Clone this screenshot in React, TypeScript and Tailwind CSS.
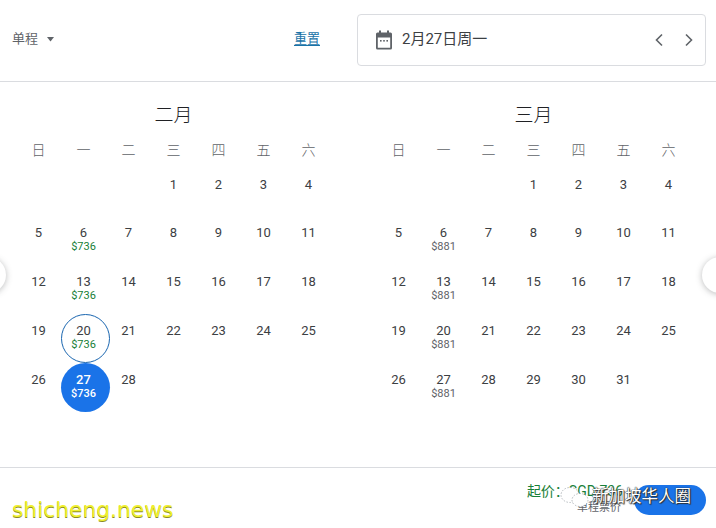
import React from "react";

const weekdays = ["日", "一", "二", "三", "四", "五", "六"];

type Cell = { d: number; p?: string } | null;

function buildMonth(days: number, start: number, price: (d: number) => string | undefined): Cell[] {
  const cells: Cell[] = [];
  for (let i = 0; i < start; i++) cells.push(null);
  for (let d = 1; d <= days; d++) cells.push({ d, p: price(d) });
  return cells;
}

const feb = buildMonth(28, 3, (d) => ([6, 13, 20, 27].includes(d) ? "$736" : undefined));
const mar = buildMonth(31, 3, (d) => ([6, 13, 20, 27].includes(d) ? "$881" : undefined));

function Day({ cell, green }: { cell: Cell; green: boolean }) {
  if (!cell) return <div className="h-[49px]" />;
  const selected = green && cell.d === 27;
  const ringed = green && cell.d === 20;
  return (
    <div className={`relative h-[49px] flex flex-col items-center ${cell.d <= 4 ? "pt-[7px]" : "pt-[6px]"}`}>
      {selected && <div className="absolute left-[-0.500px] top-[-3px] w-[49px] h-[49px] rounded-full bg-[#1a73e8]" />}
      {ringed && <div className="absolute left-[-0.500px] top-[-3px] w-[49px] h-[49px] rounded-full border border-[#1a66b0]" />}
      <div className={`relative text-[13px] leading-[16px] ${selected ? "text-white font-medium" : "text-[#3c4043]"}`}>{cell.d}</div>
      {cell.p && (
        <div
          className={`relative text-[11px] leading-[12px] ${
            selected ? "text-white font-medium" : green ? "text-[#188038]" : "text-[#5f6368]"
          }`}
        >
          {cell.p}
        </div>
      )}
    </div>
  );
}

function Month({ title, cells, green }: { title: string; cells: Cell[]; green: boolean }) {
  return (
    <div className="w-[315px] flex flex-col">
      <div className="h-[24px] mt-[1px] flex items-center justify-center text-[19px] font-light text-[#202124]">{title}</div>
      <div className="grid grid-cols-7 mt-[13px] text-[14px] font-light leading-[18px] text-[#5f6368] text-center">
        {weekdays.map((w) => (
          <div key={w}>{w}</div>
        ))}
      </div>
      <div className="grid grid-cols-7 mt-[11px]">
        {cells.map((c, i) => (
          <Day key={i} cell={c} green={green} />
        ))}
      </div>
    </div>
  );
}

export default function App() {
  return (
    <div className="relative w-[716px] h-[528px] overflow-hidden bg-white font-['Roboto','Noto_Sans_CJK_SC',sans-serif]">
      <div className="h-[82px] border-b border-[#dadce0] flex items-start">
        <div className="w-[357px] h-[81px] flex items-center pl-[12px] pr-[37px] pb-[3px]">
          <span className="text-[13px] text-[#5f6368]">单程</span>
          <svg className="ml-[8px]" width="9" height="5" viewBox="0 0 9 5">
            <path d="M1 0h7L4.500 4.500z" fill="#5f6368" />
          </svg>
          <span className="ml-auto text-[13px] text-[#1a73a8] underline underline-offset-2">重置</span>
        </div>
        <div className="mt-[14px] w-[349px] h-[52px] border border-[#dadce0] rounded-[4px] flex items-center pl-[16px] pr-[4px] pb-[1px]">
          <svg width="20" height="20" viewBox="0 0 20 20" fill="#5f6368">
            <path d="M5 0.500h2V2.500h6V0.500h2V2.500h1.500A1.500 1.500 0 0 1 18 4V18a1.500 1.500 0 0 1-1.500 1.500h-13A1.500 1.500 0 0 1 2 18V4A1.500 1.500 0 0 1 3.500 2.500H5zM3.800 7.500V17.700H16.200V7.500z" />
            <rect x="6" y="10" width="1.600" height="1.600" />
            <rect x="9.200" y="10" width="1.600" height="1.600" />
            <rect x="12.400" y="10" width="1.600" height="1.600" />
          </svg>
          <span className="ml-[8px] text-[15px] text-[#3c4043]">2月27日周一</span>
          <svg className="ml-auto" width="24" height="24" viewBox="0 0 24 24" fill="none" stroke="#5f6368" strokeWidth="1.600">
            <path d="M15 6.500 9.500 12l5.500 5.500" />
          </svg>
          <svg className="ml-[6px]" width="24" height="24" viewBox="0 0 24 24" fill="none" stroke="#5f6368" strokeWidth="1.600">
            <path d="M9 6.500 14.500 12 9 17.500" />
          </svg>
        </div>
      </div>

      <div className="h-[386px] pl-[16px] pt-[21px] flex gap-[45px] border-b border-[#dadce0]">
        <Month title="二月" cells={feb} green />
        <Month title="三月" cells={mar} green={false} />
      </div>

      <div className="relative h-[60px] flex justify-end pr-[10px] pt-[16px]">
        <div className="flex flex-col items-end mr-[11px] leading-[14px]">
          <span className="text-[14px] text-[#188038]">起价：SGD 736</span>
          <span className="text-[11px] text-[#5f6368] mt-[3px] mr-[2px]">单程票价</span>
        </div>
        <div className="w-[72px] h-[30px] mt-[1px] rounded-full bg-[#1a73e8]" />
      </div>

      {/* previous / next floating buttons */}
      <div className="absolute left-[-30px] top-[257px] w-[36px] h-[36px] rounded-full bg-white shadow-[0_1px_6px_rgba(60,64,67,0.35)]" />
      <div className="absolute left-[702px] top-[257px] w-[36px] h-[36px] rounded-full bg-white shadow-[0_1px_6px_rgba(60,64,67,0.35)]" />

      {/* watermarks */}
      <div className="absolute left-[558px] top-[485px] flex items-center">
        <svg width="32" height="24" viewBox="0 0 32 24" fill="white" stroke="#9aa0a6" strokeWidth="0.700" strokeDasharray="1.500 1.500">
          <ellipse cx="12" cy="10" rx="9" ry="7.500" />
          <ellipse cx="22" cy="15" rx="8" ry="6.500" />
        </svg>
        <span className="ml-[2px] text-[16.500px] leading-[24px] text-white [text-shadow:0_0_1px_#222,0_0_1px_#222,1px_1px_1px_#333]">新加坡华人圈</span>
      </div>
      <div className="absolute left-[12px] top-[495px] text-[21.800px] leading-[30px] text-[#f0f030] font-['DejaVu_Sans',sans-serif] [text-shadow:0_1px_0_#8a8a20]">
        shicheng.news
      </div>
    </div>
  );
}
